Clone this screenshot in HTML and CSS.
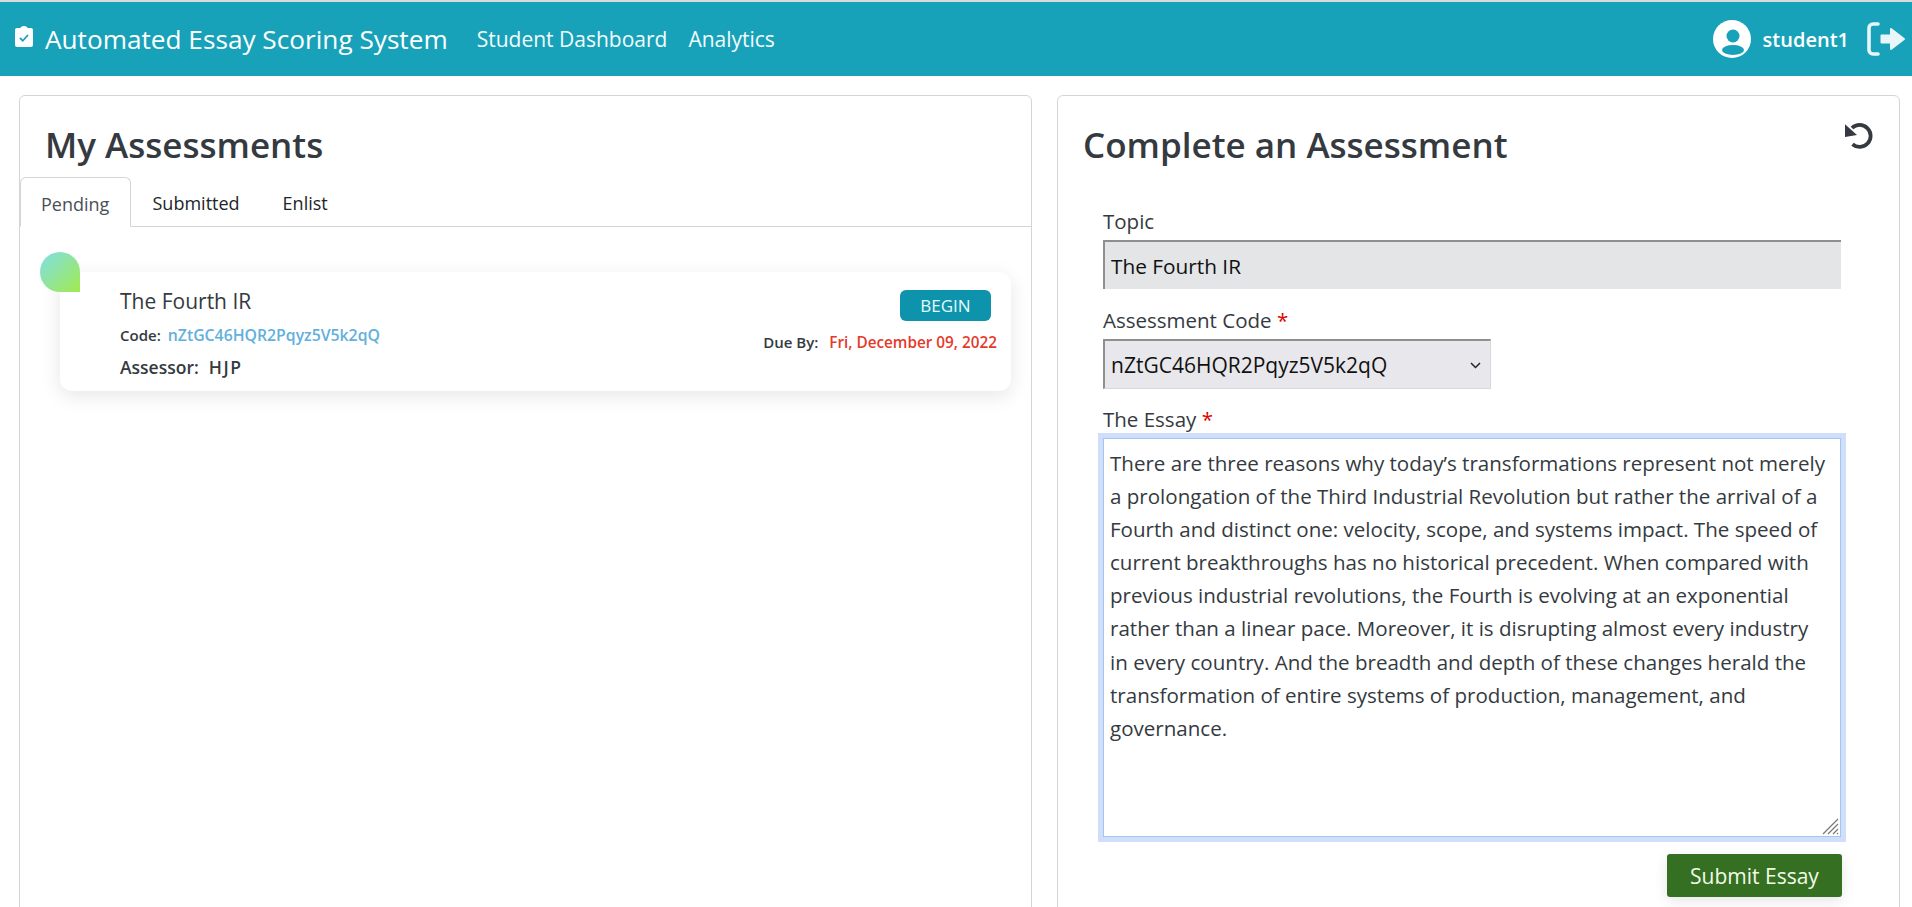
FILE: index.html
```html
<!DOCTYPE html>
<html lang="en">
<head>
    <meta charset="UTF-8">
    <title>Automated Essay Scoring System</title>
    <link rel="stylesheet" href="styles.css">
</head>
<body>

    <nav class="navbar">
        <svg class="brand-icon" viewBox="0 0 18 21">
            <path fill="#fff" d="M5.500 2C5.800.8 7.200 0 9 0s3.200.8 3.500 2h3.500c1.100 0 2 .9 2 2v15c0 1.100-.9 2-2 2H2c-1.100 0-2-.9-2-2V4c0-1.100.9-2 2-2z"/>
            <path fill="none" stroke="#18a2b9" stroke-width="1.800" d="M5 12l2.800 2.800L13 9"/>
        </svg>
        <span class="brand">Automated Essay Scoring System</span>
        <a class="nav-link" href="#">Student Dashboard</a>
        <a class="nav-link" href="#">Analytics</a>
        <div class="nav-user">
            <svg class="user-icon" viewBox="0 0 38 38">
                <circle cx="19" cy="19" r="19" fill="#fff"/>
                <circle cx="20" cy="16" r="6.500" fill="#18a2b9"/>
                <ellipse cx="20" cy="30" rx="11" ry="5" fill="#18a2b9"/>
            </svg>
            <span class="username">student1</span>
            <svg class="logout-icon" viewBox="0 0 39 34">
                <path fill="none" stroke="#e8f6fa" stroke-width="3.600" stroke-linecap="round" d="M11 2H6a4 4 0 0 0-4 4v22a4 4 0 0 0 4 4h5"/>
                <path fill="#e8f6fa" stroke="#e8f6fa" stroke-width="2" stroke-linejoin="round" d="M14.500 13.500H24V7l13 10-13 10v-6.500h-9.500z"/>
            </svg>
        </div>
    </nav>

    <main class="columns">

        <section class="panel">
            <h1 class="panel-title">My Assessments</h1>
            <div class="tabs">
                <a class="tab active" href="#">Pending</a>
                <a class="tab" href="#">Submitted</a>
                <a class="tab" href="#">Enlist</a>
            </div>
            <div class="assessment-list">
                <div class="bubble"></div>
                <div class="assessment-card">
                    <div class="card-left">
                        <div class="card-topic">The Fourth IR</div>
                        <div class="card-code"><b>Code:</b><span>nZtGC46HQR2Pqyz5V5k2qQ</span></div>
                        <div class="card-assessor"><b>Assessor:</b><b class="assessor-name">HJP</b></div>
                    </div>
                    <div class="card-right">
                        <button class="begin-btn">BEGIN</button>
                        <div class="card-due"><b>Due By:</b><span>Fri, December 09, 2022</span></div>
                    </div>
                </div>
            </div>
        </section>

        <section class="panel panel-form">
            <svg class="reset-icon" viewBox="0 0 28 28">
                <path fill="none" stroke="#343a40" stroke-width="3.800" d="M7 6A11 11 0 1 1 7.500 22.300"/>
                <path fill="#343a40" d="M0 2.300V15L12 13z"/>
            </svg>
            <h1 class="panel-title">Complete an Assessment</h1>
            <form class="essay-form">
                <label class="field-label">Topic</label>
                <input class="field-input" type="text" value="The Fourth IR" readonly>
                <label class="field-label">Assessment Code <em>*</em></label>
                <select class="field-select">
                    <option>nZtGC46HQR2Pqyz5V5k2qQ</option>
                </select>
                <label class="field-label">The Essay <em>*</em></label>
                <div class="essay-wrap">
                    <textarea class="field-essay" wrap="off">There are three reasons why today’s transformations represent not merely
a prolongation of the Third Industrial Revolution but rather the arrival of a
Fourth and distinct one: velocity, scope, and systems impact. The speed of
current breakthroughs has no historical precedent. When compared with
previous industrial revolutions, the Fourth is evolving at an exponential
rather than a linear pace. Moreover, it is disrupting almost every industry
in every country. And the breadth and depth of these changes herald the
transformation of entire systems of production, management, and
governance.</textarea>
                    <svg class="essay-grip" viewBox="0 0 17 17">
                        <path fill="none" stroke="#777" stroke-width="1.200" d="M1 16L16 1M6 16L16 6M11 16l5-5M15 16l1-1"/>
                    </svg>
                </div>
                <div class="form-actions">
                    <button class="submit-btn" type="button">Submit Essay</button>
                </div>
            </form>
        </section>

    </main>

</body>
</html>
```

FILE: styles.css
```css
* {
    box-sizing: border-box;
}

html, body {
    height: 907px;
    overflow: hidden;
}

body {
    margin: 0;
    background-color: #fff;
    border-top: 2px solid #d8dcde;
    font-family: "Open Sans", "Noto Sans", sans-serif;
    color: #343a40;
}

.navbar {
    display: flex;
    align-items: center;
    height: 74px;
    padding: 0 6px 0 15px;
    background-color: #18a2b9;
    color: #fff;
}

.brand-icon {
    width: 18px;
    height: 21px;
    margin: 0 12px 5px 0;
}

.brand {
    font-size: 26.200px;
    margin-right: 29px;
}

.nav-link {
    font-size: 21px;
    color: #f2fbfc;
    text-decoration: none;
    margin-right: 21px;
}

.nav-user {
    display: flex;
    align-items: center;
    margin-left: auto;
}

.user-icon {
    width: 38px;
    height: 38px;
    margin-right: 12px;
}

.username {
    font-size: 20px;
    font-weight: 600;
    margin-right: 18px;
}

.logout-icon {
    width: 39px;
    height: 34px;
}

.columns {
    display: grid;
    grid-template-columns: 1013px 843px;
    gap: 25px;
    padding: 19px 0 0 19px;
}

.panel {
    position: relative;
    height: 860px;
    background-color: #fff;
    border: 1px solid #d5d5d5;
    border-radius: 6px;
}

.panel-title {
    margin: 0;
    padding: 24px 0 0 25px;
    height: 81px;
    font-size: 35px;
    font-weight: 600;
    line-height: 50px;
}

.tabs {
    display: flex;
    height: 50px;
    border-bottom: 1px solid #d5d5d5;
}

.tab {
    height: 50px;
    padding: 13px 21.500px 0;
    font-size: 18px;
    line-height: 26px;
    color: #212529;
    text-decoration: none;
}

.tab.active {
    width: 111px;
    padding-left: 20px;
    padding-right: 0;
    color: #495057;
    background-color: #fff;
    border: 1px solid #d5d5d5;
    border-bottom-color: #fff;
    border-radius: 6px 6px 0 0;
}

.assessment-list {
    position: relative;
    padding: 45px 20px 0 40px;
}

.bubble {
    position: absolute;
    left: 20px;
    top: 25px;
    width: 40px;
    height: 40px;
    border-radius: 20px 20px 0 20px;
    background: linear-gradient(135deg, #7fdfe6, #a2ea4e);
}

.assessment-card {
    display: flex;
    justify-content: space-between;
    height: 119px;
    padding: 15px 14px 0 60px;
    background-color: #fff;
    border-radius: 12px;
    box-shadow: 0 5px 20px rgba(0, 0, 0, 0.1);
}

.card-topic {
    font-size: 21px;
    line-height: 28px;
}

.card-code {
    display: flex;
    align-items: baseline;
    gap: 7px;
    margin-top: 10px;
    font-size: 15px;
    line-height: 20px;
}

.card-code b, .card-due b, .card-assessor b {
    font-weight: 600;
}

.card-code span {
    font-size: 15.800px;
    font-weight: 600;
    color: #62b0dc;
}

.card-assessor {
    display: flex;
    gap: 10px;
    margin-top: 11px;
    font-size: 17.500px;
    line-height: 22px;
}

.assessor-name {
    letter-spacing: 1.500px;
}

.card-right {
    display: flex;
    flex-direction: column;
    align-items: flex-end;
}

.begin-btn {
    width: 91px;
    height: 31px;
    margin: 3px 6px 0 0;
    padding: 0;
    border: none;
    border-radius: 6px;
    background-color: #0e93ac;
    color: #e6fbfb;
    font-family: inherit;
    font-size: 17px;
}

.card-due {
    display: flex;
    align-items: baseline;
    gap: 11px;
    margin-top: 11px;
    font-size: 15px;
    line-height: 20px;
}

.card-due span {
    font-size: 15.300px;
    font-weight: 600;
    color: #e53a2b;
}

.reset-icon {
    position: absolute;
    right: 26px;
    top: 26px;
    width: 28px;
    height: 28px;
}

.essay-form {
    display: flex;
    flex-direction: column;
    align-items: flex-start;
    padding: 30px 58px 0 45px;
}

.field-label {
    font-size: 20.500px;
    line-height: 28px;
    color: #343a40;
}

.field-label em {
    font-style: normal;
    color: #e00000;
}

.field-input, .field-select, .field-essay {
    font-family: inherit;
    color: #111;
}

.field-input {
    width: 100%;
    height: 49px;
    margin: 5px 0 17px;
    padding: 0 6px;
    font-size: 20.800px;
    background-color: #e3e5e6;
    border: 0;
    border-top: 2px solid #8f8f8f;
    border-left: 2px solid #8f8f8f;
    outline: none;
}

.field-select {
    width: 388px;
    height: 50px;
    margin: 5px 0 16px;
    padding: 0 6px;
    font-size: 21px;
    appearance: none;
    background-color: #e8e8ec;
    background-image: url("data:image/svg+xml,%3Csvg xmlns='http://www.w3.org/2000/svg' width='11' height='7'%3E%3Cpath fill='none' stroke='%23222' stroke-width='1.500' d='M1 1l4.500 4.500L10 1'/%3E%3C/svg%3E");
    background-repeat: no-repeat;
    background-position: 365px 21px;
    border: 1px solid #d8d8dc;
    border-top: 2px solid #8f8f8f;
    border-left: 2px solid #8f8f8f;
}

.essay-wrap {
    position: relative;
    width: 100%;
    margin-top: 5px;
}

.field-essay {
    display: block;
    width: 100%;
    height: 399px;
    padding: 8px 6px 6px;
    font-size: 20.550px;
    line-height: 33.100px;
    overflow: hidden;
    color: #343a40;
    border: 1px solid #a8c3ee;
    outline: 5px solid #cfdffb;
    resize: none;
}

.essay-grip {
    position: absolute;
    right: 2px;
    bottom: 2px;
    width: 17px;
    height: 17px;
}

.form-actions {
    display: flex;
    justify-content: flex-end;
    width: 100%;
    margin-top: 17px;
}

.submit-btn {
    width: 175px;
    height: 43px;
    margin-right: -1px;
    padding: 0;
    border: none;
    border-radius: 3px;
    background-color: #356f22;
    color: #f2fbe8;
    font-family: inherit;
    font-size: 21px;
    box-shadow: 0 4px 14px rgba(0, 0, 0, 0.1);
}
```
